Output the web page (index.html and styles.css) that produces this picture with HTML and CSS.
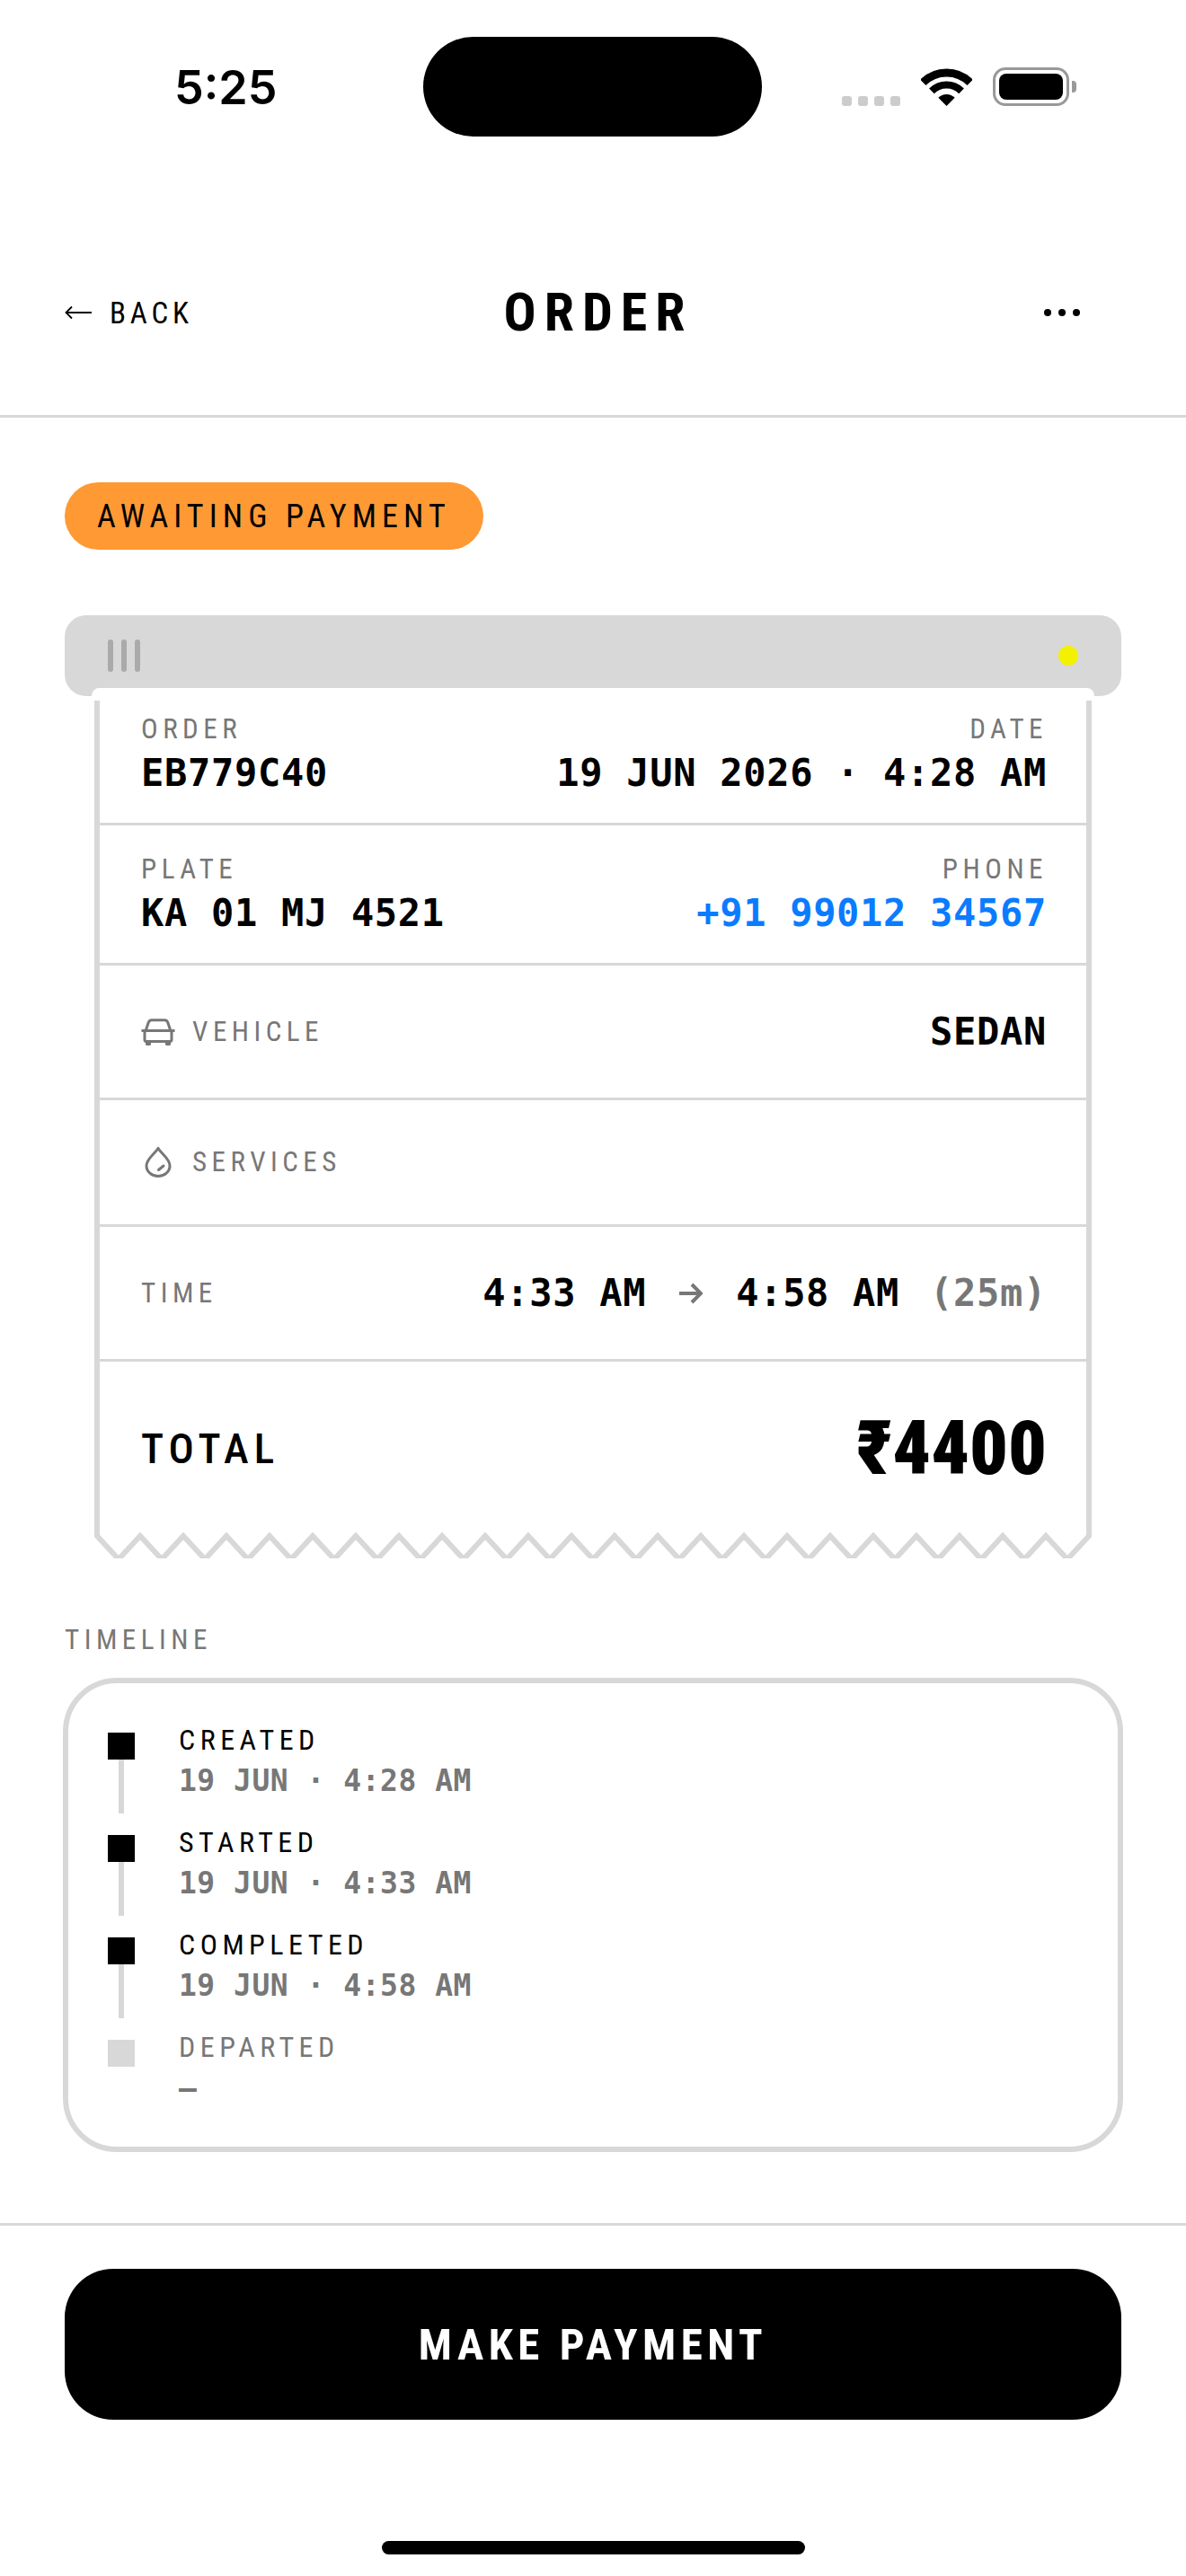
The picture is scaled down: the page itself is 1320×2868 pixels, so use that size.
FILE: index.html
```html
<!DOCTYPE html>
<html>
  <head>
    <meta charset="utf-8">
    <title>Order</title>
    <link rel="stylesheet" href="styles.css">
  </head>
  <body>
    <div class="status">
      <div class="clock">5:25</div>
      <div class="island"></div>
      <div class="status-icons">
        <div class="signal"><i></i><i></i><i></i><i></i></div>
        <svg class="wifi" width="57" height="42" viewBox="0 0 57 42">
          <path d="M2.3 15.8A37 37 0 0 1 54.7 15.8" fill="none" stroke="#000" stroke-width="9"/>
          <path d="M11.9 25.4A23.5 23.5 0 0 1 45.1 25.4" fill="none" stroke="#000" stroke-width="8"/>
          <path d="M28.5 42L19.3 32.8A13 13 0 0 1 37.7 32.8Z"/>
        </svg>
        <div class="battery"><div class="battery-fill"></div></div>
        <div class="battery-nub"></div>
      </div>
    </div>

    <div class="nav">
      <div class="back">
        <svg width="30" height="16" viewBox="0 0 30 16">
          <path d="M30 8H1.5M8 1.500L1.500 8l6.500 6.500" fill="none" stroke="#000" stroke-width="1.800"/>
        </svg>
        <span>BACK</span>
      </div>
      <div class="title">ORDER</div>
      <div class="more"><i></i><i></i><i></i></div>
    </div>

    <div class="main">
      <div class="badge">AWAITING PAYMENT</div>

      <div class="tray">
        <div class="grip"><i></i><i></i><i></i></div>
        <div class="led"></div>
      </div>
      <div class="lip"></div>
      <div class="receipt">
        <div class="receipt-body">
          <div class="row row-first">
            <div>
              <div class="label">ORDER</div>
              <div class="value">EB779C40</div>
            </div>
            <div class="right">
              <div class="label">DATE</div>
              <div class="value">19 JUN 2026 · 4:28 AM</div>
            </div>
          </div>
          <div class="row row-second">
            <div>
              <div class="label">PLATE</div>
              <div class="value">KA 01 MJ 4521</div>
            </div>
            <div class="right">
              <div class="label">PHONE</div>
              <div class="value phone">+91 99012 34567</div>
            </div>
          </div>
          <div class="row row-vehicle">
            <div class="label-icon">
              <svg class="icon" width="38" height="30" viewBox="0 0 38 30">
                <path d="M5 14L8.200 4.600C8.700 3 10 1.800 11.600 1.800H26.400C28 1.800 29.300 3 29.800 4.600L33 14" fill="none" stroke="#777" stroke-width="3"/>
                <rect x="4" y="13.500" width="30" height="12" rx="2" fill="none" stroke="#777" stroke-width="3"/>
                <path d="M.5 13.500H4M34 13.500H37.500" stroke="#777" stroke-width="3"/>
                <path d="M5 26h6v2.500a1.500 1.500 0 0 1-1.500 1.500h-3A1.500 1.500 0 0 1 5 28.500zM27 26h6v2.500a1.500 1.500 0 0 1-1.500 1.500h-3a1.500 1.500 0 0 1-1.500-1.500z" fill="#777"/>
              </svg>
              <span class="label">VEHICLE</span>
            </div>
            <div class="value">SEDAN</div>
          </div>
          <div class="row row-services">
            <div class="label-icon">
              <svg class="icon" width="38" height="34" viewBox="0 0 38 34">
                <path d="M19 1.500C15 8 6 13 6 21a13 11.500 0 0 0 26 0C32 13 23 8 19 1.500Z" fill="none" stroke="#777" stroke-width="3"/>
                <path d="M19.500 25.500L25 21" fill="none" stroke="#777" stroke-width="3" stroke-linecap="round"/>
              </svg>
              <span class="label">SERVICES</span>
            </div>
          </div>
          <div class="row row-time">
            <div class="label">TIME</div>
            <div class="times">
              <span class="value">4:33 AM</span>
              <svg width="26" height="24" viewBox="0 0 26 24">
                <path d="M0 12H24M14 2l10 10-10 10" fill="none" stroke="#777" stroke-width="4"/>
              </svg>
              <span class="value">4:58 AM</span>
              <span class="value duration">(25m)</span>
            </div>
          </div>
          <div class="row row-total">
            <div class="total-label">TOTAL</div>
            <div class="total-value">₹4400</div>
          </div>
        </div>
        <svg class="zigzag" width="1110" height="29" viewBox="0 0 1110 29">
          <path fill="none" stroke="#d8d8d8" stroke-width="6" d="M3 0V4
            l24 26 24-26 l24 26 24-26 l24 26 24-26 l24 26 24-26 l24 26 24-26
            l24 26 24-26 l24 26 24-26 l24 26 24-26 l24 26 24-26 l24 26 24-26
            l24 26 24-26 l24 26 24-26 l24 26 24-26 l24 26 24-26 l24 26 24-26
            l24 26 24-26 l24 26 24-26 l24 26 24-26 l24 26 24-26 l24 26 24-26
            l24 26 24-26 l24 26 24-26 l24 26 24-26 V0"/>
        </svg>
      </div>

      <div class="label timeline-label">TIMELINE</div>
      <div class="timeline">
        <div class="step">
          <div class="marker"><div class="square"></div><div class="line"></div></div>
          <div>
            <div class="step-name">CREATED</div>
            <div class="step-time">19 JUN · 4:28 AM</div>
          </div>
        </div>
        <div class="step">
          <div class="marker"><div class="square"></div><div class="line"></div></div>
          <div>
            <div class="step-name">STARTED</div>
            <div class="step-time">19 JUN · 4:33 AM</div>
          </div>
        </div>
        <div class="step">
          <div class="marker"><div class="square"></div><div class="line"></div></div>
          <div>
            <div class="step-name">COMPLETED</div>
            <div class="step-time">19 JUN · 4:58 AM</div>
          </div>
        </div>
        <div class="step pending">
          <div class="marker"><div class="square"></div></div>
          <div>
            <div class="step-name">DEPARTED</div>
            <div class="step-time">—</div>
          </div>
        </div>
      </div>
    </div>

    <div class="footer">
      <div class="pay">MAKE PAYMENT</div>
      <div class="home"></div>
    </div>
  </body>
</html>
```

FILE: styles.css
```css
* {
  box-sizing: border-box;
}
body {
  margin: 0;
  width: 1320px;
  height: 2868px;
  display: flex;
  flex-direction: column;
  background-color: #fff;
  color: #000;
  font-family: Roboto, sans-serif;
  font-stretch: 75%;
}

/* status bar */
.status {
  display: grid;
  grid-template-columns: 471px 377px 1fr;
  align-items: center;
  padding-top: 41px;
  height: 152px;
}
.clock {
  padding: 2px 0 0 194px;
  font-family: Inter, sans-serif;
  font-stretch: 100%;
  font-size: 52px;
  font-weight: 600;
  line-height: 60px;
}
.island {
  height: 111px;
  background-color: #000;
  border-radius: 56px;
}
.status-icons {
  display: flex;
  align-items: flex-end;
  padding-left: 89px;
  height: 43px;
}
.signal {
  display: flex;
  gap: 7px;
  margin-right: 23px;
}
.signal i {
  width: 11px;
  height: 11px;
  background-color: #ccc;
  border-radius: 3px;
}
.wifi {
  display: block;
  margin-right: 23px;
}
.battery {
  width: 85px;
  height: 43px;
  padding: 4px;
  border: 3px solid #999;
  border-radius: 14px;
}
.battery-fill {
  width: 100%;
  height: 100%;
  background-color: #000;
  border-radius: 8px;
}
.battery-nub {
  width: 5px;
  height: 13px;
  margin: 0 0 15px 3px;
  background-color: #999;
  border-radius: 0 4px 4px 0;
}

/* nav */
.nav {
  display: grid;
  grid-template-columns: 1fr auto 1fr;
  align-items: center;
  height: 313px;
  padding: 165px 72px 83px;
  border-bottom: 3px solid #d8d8d8;
}
.back {
  display: flex;
  align-items: center;
  gap: 20px;
  font-size: 33px;
  letter-spacing: 4.800px;
}
.title {
  padding-left: 12px;
  font-size: 60px;
  font-weight: 700;
  letter-spacing: 9px;
  line-height: 62px;
}
.more {
  display: flex;
  justify-content: flex-end;
  gap: 8px;
  padding-right: 46px;
}
.more i {
  width: 8px;
  height: 8px;
  background-color: #000;
  border-radius: 50%;
}

.main {
  flex: 1;
  padding: 72px 72px 0;
}
.badge {
  display: inline-flex;
  align-items: center;
  height: 75px;
  padding: 0 36px;
  margin-bottom: 73px;
  background-color: #f93;
  border-radius: 38px;
  font-size: 36px;
  letter-spacing: 6.100px;
  vertical-align: top;
}

/* receipt */
.tray {
  display: flex;
  justify-content: space-between;
  align-items: center;
  height: 90px;
  padding: 0 48px;
  background-color: #d8d8d8;
  border-radius: 24px;
}
.grip {
  display: flex;
  gap: 9px;
}
.grip i {
  width: 6px;
  height: 36px;
  background-color: #aaa;
  border-radius: 3px;
}
.led {
  width: 22px;
  height: 22px;
  background-color: #f2f200;
  border-radius: 50%;
}
.lip {
  height: 14px;
  margin: -9px 30px 0;
  position: relative;
  background-color: #fff;
  border-radius: 9px 9px 6px 6px;
}
.receipt {
  margin: 0 33px;
}
.receipt-body {
  background-color: #fff;
  border-left: 6px solid #d8d8d8;
  border-right: 6px solid #d8d8d8;
}
.row {
  display: flex;
  justify-content: space-between;
  align-items: center;
  padding: 0 44px 0 46px;
  border-bottom: 3px solid #d8d8d8;
}
.row-first {
  height: 139px;
  align-items: flex-start;
  padding-top: 14px;
}
.row-second {
  height: 156px;
  align-items: flex-start;
  padding-top: 31px;
}
.row-first .value,
.row-second .value {
  margin-top: 6px;
}
.row-vehicle {
  height: 150px;
}
.row-services {
  height: 141px;
}
.row-time {
  height: 150px;
}
.row-total {
  height: 190px;
  padding-top: 3px;
  border-bottom: 0;
}
.right {
  text-align: right;
}
.label {
  font-size: 31px;
  line-height: 36px;
  letter-spacing: 5.500px;
  color: #777;
}
.value {
  font-family: "DejaVu Sans Mono", monospace;
  font-size: 42px;
  font-weight: 700;
  letter-spacing: 0.700px;
  line-height: 50px;
}
.right .label {
  margin-right: -1px;
}
.phone {
  color: #0a7cff;
}
.label-icon {
  display: flex;
  align-items: center;
}
.icon {
  display: block;
  margin-right: 19px;
}
.times {
  display: flex;
  align-items: center;
  gap: 37px;
}
.duration {
  color: #777;
  margin-left: -3px;
}
.total-label {
  font-size: 47px;
  font-weight: 500;
  letter-spacing: 6px;
}
.total-value {
  font-size: 84px;
  font-weight: 900;
  line-height: 90px;
}
.zigzag {
  display: block;
}

/* timeline */
.timeline-label {
  margin-top: 73px;
}
.timeline {
  height: 528px;
  margin: 24px -2px 0;
  padding: 44px 0 0 44px;
  border: 6px solid #d8d8d8;
  border-radius: 60px;
}
.step {
  display: flex;
  height: 114px;
}
.marker {
  width: 30px;
  margin: 11px 49px 0 0;
}
.square {
  width: 30px;
  height: 30px;
  background-color: #000;
}
.line {
  width: 6px;
  height: 60px;
  margin-left: 12px;
  background-color: #d8d8d8;
}
.step-name {
  margin-top: 1px;
  font-size: 32px;
  line-height: 36px;
  letter-spacing: 5.500px;
}
.step-time {
  margin-top: 1px;
  font-family: "DejaVu Sans Mono", monospace;
  font-size: 33px;
  font-weight: 700;
  letter-spacing: 0.500px;
  line-height: 54px;
  color: #777;
}
.pending .square {
  background-color: #d8d8d8;
}
.pending .step-name {
  color: #777;
}

/* footer */
.footer {
  height: 393px;
  padding: 48px 72px 0;
  border-top: 3px solid #d8d8d8;
}
.pay {
  display: flex;
  justify-content: center;
  align-items: center;
  height: 168px;
  background-color: #000;
  border-radius: 54px;
  color: #fff;
  font-size: 49px;
  font-weight: 700;
  letter-spacing: 5.500px;
}
.home {
  width: 471px;
  height: 15px;
  margin: 135px auto 0;
  background-color: #000;
  border-radius: 8px;
}
```
